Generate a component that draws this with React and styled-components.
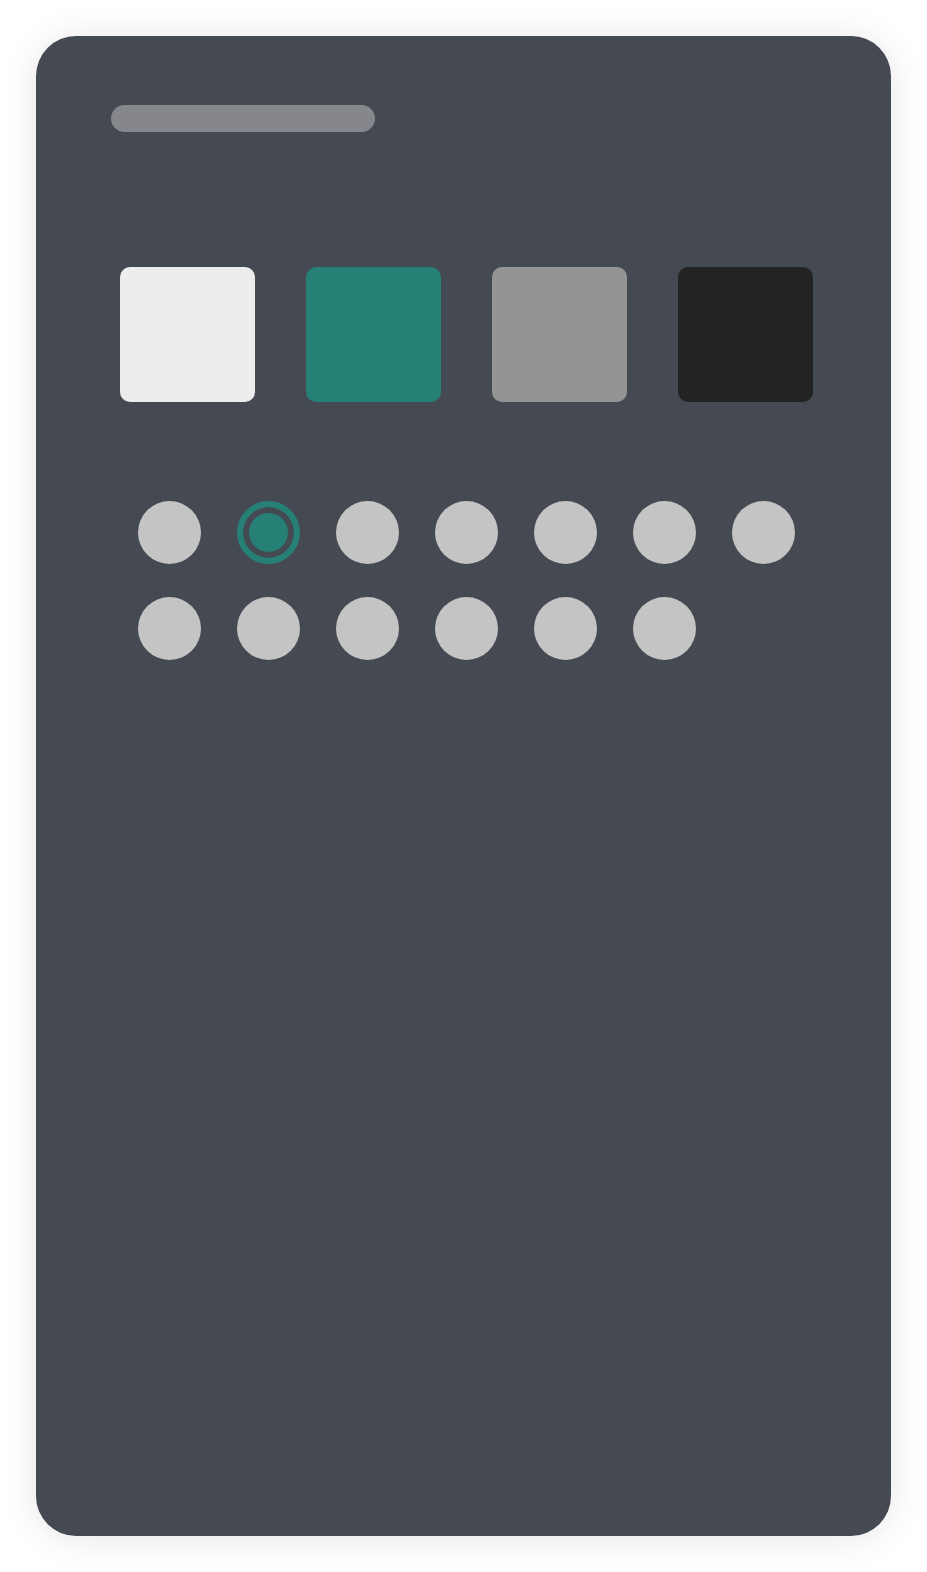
import React, { useState } from "react";
import styled, { createGlobalStyle } from "styled-components";

const swatches = ["#ededed", "#268075", "#949494", "#232323"];
const dotCount = 13;

const App = () => {
  const [selected, setSelected] = useState(1);
  return (
    <>
      <GlobalStyle />
      <Page>
        <Card>
          <TitleBar />
          <SwatchRow>
            {swatches.map((c) => (
              <Swatch key={c} $color={c} />
            ))}
          </SwatchRow>
          <DotGrid>
            {Array.from({ length: dotCount }).map((_, i) => (
              <Dot
                key={i}
                $selected={i === selected}
                onClick={() => setSelected(i)}
              />
            ))}
          </DotGrid>
        </Card>
      </Page>
    </>
  );
};
export default App;

const GlobalStyle = createGlobalStyle`
  html, body {
    margin: 0;
    background: #ffffff;
    font-family: "Liberation Sans", Arial, sans-serif;
  }
`;

const Page = styled.div`
  padding: 36px;
`;

const Card = styled.div`
  height: 1500px;
  box-sizing: border-box;
  padding-top: 69px;
  border-radius: 40px;
  background: #454952;
  box-shadow: 0 2px 36px rgba(0, 0, 0, 0.1);
  display: flex;
  flex-direction: column;
`;

const TitleBar = styled.div`
  width: 264px;
  height: 27px;
  margin-left: 75px;
  border-radius: 14px;
  background: #86878c;
`;

const SwatchRow = styled.div`
  display: grid;
  grid-template-columns: repeat(4, 135px);
  column-gap: 51px;
  margin: 135px 0 0 84px;
`;

const Swatch = styled.div`
  height: 135px;
  border-radius: 10px;
  background: ${(p) => p.$color};
`;

const DotGrid = styled.div`
  display: grid;
  grid-template-columns: repeat(7, 63px);
  column-gap: 36px;
  row-gap: 33px;
  margin: 99px 0 0 102px;
`;

const Dot = styled.div`
  width: 63px;
  height: 63px;
  box-sizing: border-box;
  border-radius: 50%;
  cursor: pointer;
  background: ${(p) => (p.$selected ? "#268075" : "#c4c4c4")};
  border: ${(p) => (p.$selected ? "6px solid #268075" : "none")};
  box-shadow: ${(p) => (p.$selected ? "inset 0 0 0 6px #454952" : "none")};
`;
